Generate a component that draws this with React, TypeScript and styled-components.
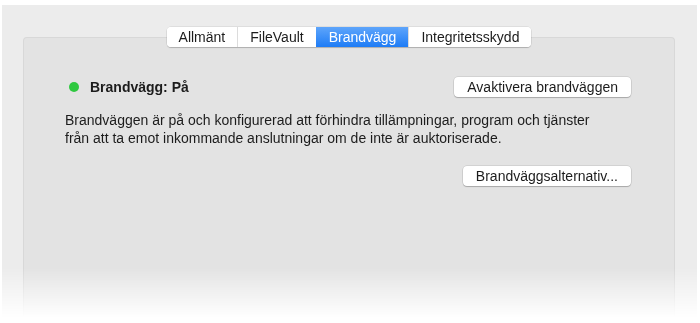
import React, { useState } from 'react';
import styled, { createGlobalStyle } from 'styled-components';

const GlobalStyle = createGlobalStyle`
  html, body {
    margin: 0;
    padding: 0;
    background: #ffffff;
  }
  body {
    font-family: 'Liberation Sans', Arial, sans-serif;
    color: #1c1c1c;
  }
`;

const Window = styled.div`
  margin: 5px 3px 0 2px;
  height: 313px;
  background: #ececec;
  display: flex;
  flex-direction: column;
  align-items: center;
  padding: 22px 22px 0 21px;
  box-sizing: border-box;
  -webkit-mask-image: linear-gradient(to bottom, #000 263px, rgba(0, 0, 0, 0) 313px);
  mask-image: linear-gradient(to bottom, #000 263px, rgba(0, 0, 0, 0) 313px);
`;

const TabBar = styled.div`
  display: flex;
  position: relative;
  z-index: 1;
  margin-bottom: -10px;
  background: #ffffff;
  border-radius: 4px;
  box-shadow: 0 0 0 0.5px rgba(0, 0, 0, 0.12), 0 1px 1px rgba(0, 0, 0, 0.18);
  overflow: hidden;
`;

const Tab = styled.button<{ $active?: boolean }>`
  font-family: 'Liberation Sans', Arial, sans-serif;
  font-size: 14px;
  height: 20px;
  padding: 0 12px;
  border: none;
  border-left: 1px solid ${p => (p.$active ? 'transparent' : '#dcdcdc')};
  background: ${p => (p.$active ? 'linear-gradient(#5ea5fb, #1e7cf6)' : '#ffffff')};
  color: ${p => (p.$active ? '#ffffff' : '#1c1c1c')};
  cursor: default;

  &:first-child {
    border-left: none;
  }
`;

const Panel = styled.div`
  align-self: stretch;
  flex: 1;
  background: #e3e3e3;
  border: 1px solid #d8d8d8;
  border-bottom: none;
  border-radius: 4px 4px 0 0;
  padding: 39px 43px 0 41px;
  display: flex;
  flex-direction: column;
`;

const StatusRow = styled.div`
  display: flex;
  align-items: center;
  justify-content: space-between;
`;

const Status = styled.div`
  display: flex;
  align-items: center;
  gap: 11px;
  font-size: 14px;
  font-weight: bold;
  padding-left: 4px;
`;

const Dot = styled.span`
  width: 10px;
  height: 10px;
  border-radius: 50%;
  background: #2fc840;
`;

const Button = styled.button`
  font-family: 'Liberation Sans', Arial, sans-serif;
  font-size: 14px;
  color: #1c1c1c;
  height: 20px;
  padding: 0 13px;
  background: #ffffff;
  border: none;
  border-radius: 4px;
  box-shadow: 0 0 0 0.5px rgba(0, 0, 0, 0.15), 0 1px 1px rgba(0, 0, 0, 0.2);
  cursor: default;
`;

const Description = styled.p`
  margin: 14px 0 0;
  font-size: 14px;
  line-height: 18px;
  white-space: nowrap;
`;

const OptionsRow = styled.div`
  display: flex;
  justify-content: flex-end;
  margin-top: 19px;
`;

const tabs = ['Allmänt', 'FileVault', 'Brandvägg', 'Integritetsskydd'];

export default function App() {
  const [active, setActive] = useState('Brandvägg');

  return (
    <>
      <GlobalStyle />
      <Window>
        <TabBar>
          {tabs.map(t => (
            <Tab key={t} $active={t === active} onClick={() => setActive(t)}>
              {t}
            </Tab>
          ))}
        </TabBar>
        <Panel>
          <StatusRow>
            <Status>
              <Dot />
              Brandvägg: På
            </Status>
            <Button>Avaktivera brandväggen</Button>
          </StatusRow>
          <Description>
            Brandväggen är på och konfigurerad att förhindra tillämpningar, program och tjänster
            <br />
            från att ta emot inkommande anslutningar om de inte är auktoriserade.
          </Description>
          <OptionsRow>
            <Button>Brandväggsalternativ...</Button>
          </OptionsRow>
        </Panel>
      </Window>
    </>
  );
}
